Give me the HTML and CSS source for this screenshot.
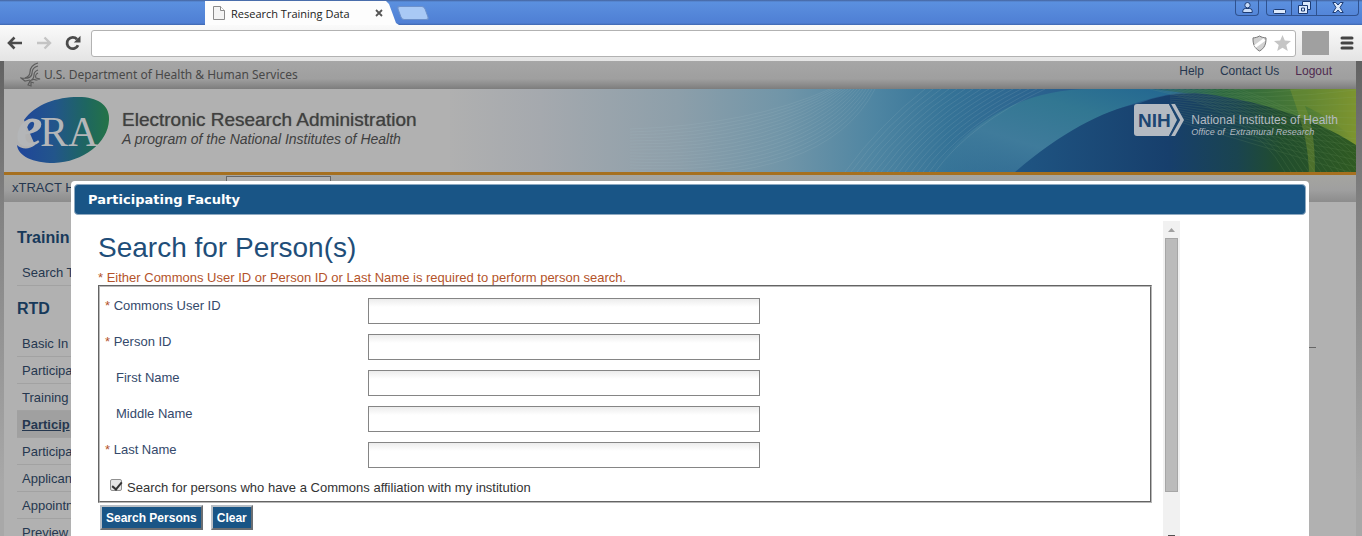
FILE: index.html
```html
<!DOCTYPE html>
<html lang="en">
<head>
    <meta charset="UTF-8">
    <meta name="viewport" content="width=device-width, initial-scale=1.0">
    <title>Research Training Data</title>
    <link rel="stylesheet" href="styles.css">
</head>
<body>
    <!-- Browser frame -->
    <div class="titlebar">
        <div class="tab">
            <svg width="12" height="14" viewBox="0 0 12 14"><path d="M.5.5h7l4 4v9H.5z" fill="#f4f4f4" stroke="#8a8a8a"/><path d="M7.500.5v4h4" fill="#fff" stroke="#8a8a8a"/></svg>
            <span class="tab-title">Research Training Data</span>
            <button class="tab-close" aria-label="Close tab"><svg width="8" height="8" viewBox="0 0 8 8"><path d="M1 1l6 6M7 1L1 7" stroke="#555" stroke-width="1.800"/></svg></button>
        </div>
        <button class="new-tab" aria-label="New tab"></button>
        <div class="window-buttons">
            <button class="user" aria-label="User"><svg width="11" height="11" viewBox="0 0 11 11"><circle cx="5.500" cy="3.200" r="2.700" fill="#c9dcf8" stroke="#1d3c74"/><path d="M.8 10.500V8.800Q1 6.500 3.500 6.500h4q2.500 0 2.700 2.300v1.700z" fill="#c9dcf8" stroke="#1d3c74"/></svg></button>
            <div class="group">
                <button aria-label="Minimize"><svg width="13" height="12" viewBox="0 0 13 12"><rect x=".5" y="7.500" width="12" height="4" rx="1" fill="#dce9fb" stroke="#1d3c74"/></svg></button>
                <button aria-label="Restore"><svg width="13" height="13" viewBox="0 0 13 13"><path d="M4.500.5h8v8h-3v4h-9v-8h4z" fill="#dce9fb" stroke="#1d3c74"/><path d="M4.500 4.500h5v4M3.500 7h3v3h-3z" fill="none" stroke="#1d3c74"/></svg></button>
                <button class="close" aria-label="Close"><svg width="12" height="11" viewBox="0 0 12 11"><path d="M.8.5h3L6 3 8.200.5h3L8 5.500l3.200 5h-3L6 8l-2.200 2.500h-3L4 5.500z" fill="#dce9fb" stroke="#1d3c74"/></svg></button>
            </div>
        </div>
    </div>
    <div class="toolbar">
        <div class="nav-buttons">
            <button aria-label="Back"><svg width="16" height="14" viewBox="0 0 16 14"><path d="M15 7H2M7.500 1.500L2 7l5.500 5.500" fill="none" stroke="#4a4a4a" stroke-width="2.600"/></svg></button>
            <button aria-label="Forward"><svg width="16" height="14" viewBox="0 0 16 14"><path d="M1 7h13M8.500 1.500L14 7l-5.500 5.500" fill="none" stroke="#c4c4c4" stroke-width="2.400"/></svg></button>
            <button aria-label="Reload"><svg width="16" height="16" viewBox="0 0 16 16"><path d="M13 10.200A5.700 5.700 0 1 1 12 4.200" fill="none" stroke="#4a4a4a" stroke-width="2.800"/><path d="M15.500.8v6.700H8.800z" fill="#4a4a4a"/></svg></button>
        </div>
        <div class="omnibox">
            <input type="text" aria-label="Address">
            <svg width="15" height="17" viewBox="0 0 15 17"><path d="M7.500 1c2 1.200 4 1.800 6.500 1.900.2 6-1.500 10.500-6.500 13.100C2.500 13.400.8 8.900 1 2.900 3.500 2.800 5.500 2.200 7.500 1z" fill="#d2d2d2" stroke="#777"/><path d="M3 11.500L12.500 4.500" stroke="#fff" stroke-width="3"/></svg>
            <svg width="17" height="16" viewBox="0 0 17 16"><path d="M8.500 0l2.300 5.600 6.200.4-4.700 3.900 1.500 6.100-5.300-3.300L3.200 16l1.500-6.100L0 6l6.200-.4z" fill="#c5c5c5"/></svg>
        </div>
        <div class="extension"></div>
        <button class="menu" aria-label="Menu"><svg width="14" height="14" viewBox="0 0 14 14"><path d="M2 2h10M2 7h10M2 12h10" stroke="#444" stroke-width="3" stroke-linecap="round"/></svg></button>
    </div>

    <div class="viewport">
        <div class="page">
            <div class="topbar">
                <svg class="hhs" width="21" height="26" viewBox="0 0 21 26"><g fill="none" stroke="#5c5c5c" stroke-width="1.200"><path d="M18 2c-5 1-8 5-8 9 0 3-2 5-5 6"/><path d="M18 5c-4 1-6 4-6 7 0 4-3 6-11 5l4 3 5-1"/><path d="M18 9c-3 1-4 3-4 5 0 3-2 5-4 6l-2 4 3 1v-4l3 1"/><path d="M18 12c-2 1-3 3-2 5l4 1-4 1c-2-1-3-1-4 0"/></g></svg>
                <span class="dept">U.S. Department of Health &amp; Human Services</span>
                <nav class="toplinks">
                    <a href="#">Help</a>
                    <a href="#">Contact Us</a>
                    <a href="#" class="visited">Logout</a>
                </nav>
            </div>
            <header class="banner">
                <svg class="art" viewBox="0 0 906 83" preserveAspectRatio="none">
                    <defs>
                        <linearGradient id="sky"><stop offset="0" stop-color="#b0b0b0"/><stop offset=".1" stop-color="#a5a9ae"/><stop offset=".25" stop-color="#8d9faa"/><stop offset=".37" stop-color="#7095a8"/><stop offset=".47" stop-color="#4e85a2"/><stop offset=".55" stop-color="#357397"/><stop offset=".68" stop-color="#285e8c"/><stop offset="1" stop-color="#205680"/></linearGradient>
                        <linearGradient id="teal" x1="0" y1="1" x2="1" y2="0"><stop offset="0" stop-color="#3f7b9b" stop-opacity="0"/><stop offset=".35" stop-color="#3f7b9b"/><stop offset=".65" stop-color="#327792"/><stop offset="1" stop-color="#206491"/></linearGradient>
                        <linearGradient id="deep" gradientUnits="userSpaceOnUse" x1="565" y1="0" x2="906" y2="0"><stop offset="0" stop-color="#1f5583"/><stop offset=".45" stop-color="#173f6c"/><stop offset=".65" stop-color="#1a4450"/><stop offset=".78" stop-color="#214d2d"/><stop offset="1" stop-color="#2f5a22"/></linearGradient>
                        <linearGradient id="green"><stop offset="0" stop-color="#1f5f7f"/><stop offset=".35" stop-color="#2b663e"/><stop offset=".75" stop-color="#4b7a35"/><stop offset="1" stop-color="#7d9430"/></linearGradient>
                    </defs>
                    <rect width="906" height="83" fill="url(#sky)"/>
                    <path d="M480 83C520 35 570 0 640 0h110C690 8 650 25 618 45L570 83z" fill="url(#teal)"/>
                    <path d="M700 0h206v60C850 25 780 8 700 0z" fill="url(#green)"/>
                    <path d="M565 83C610 45 650 22 690 14Q715 4 745 4C810 10 870 32 906 56v27z" fill="url(#deep)"/>
                    <path d="M840 0c10 28 18 50 19 83h6c0-25-2-48-10-66 18 8 36 20 51 36V0z" fill="#7d9430" opacity=".45"/>
                    <g id="waves" fill="none" stroke="#a9c3cb" stroke-width=".5" opacity=".3"></g>
                    <g id="mesh" fill="none" stroke="#8fb57c" stroke-width=".5" opacity=".25"></g>
                </svg>
                <svg class="era" width="94" height="68" viewBox="0 0 94 68">
                    <defs>
                        <linearGradient id="oval"><stop offset="0" stop-color="#1f459b"/><stop offset=".4" stop-color="#22558b"/><stop offset=".75" stop-color="#1e6660"/><stop offset="1" stop-color="#247346"/></linearGradient>
                    </defs>
                    <path d="M8 24C20 7 44 0 66 1c18 1 28 10 27 23-1 23-26 42-55 43C17 67 2 60 1 49c4 4 12 5 18 0z" fill="url(#oval)"/>
                    <text x="0" y="50" class="era-e">e</text>
                    <text x="24" y="50" class="era-ra">RA</text>
                </svg>
                <div class="brand">
                    <div class="brand-name">Electronic Research Administration</div>
                    <div class="brand-sub">A program of the National Institutes of Health</div>
                </div>
                <div class="nih">
                    <svg width="51" height="32" viewBox="0 0 51 32"><path d="M3 0h32l8 16-8 16H3q-3 0-3-3V3q0-3 3-3z" fill="#b4bac2"/><path d="M36 0l9 16-9 16h5l9-16-9-16z" fill="#b4bac2"/><path d="M36 0l9 16-9 16" fill="none" stroke="#1d4672" stroke-width="2"/><text x="4" y="23" class="nih-mark">NIH</text></svg>
                    <div>
                        <div class="nih-name">National Institutes of Health</div>
                        <div class="nih-sub">Office of &nbsp;Extramural Research</div>
                    </div>
                </div>
            </header>
            <nav class="menubar">
                <a href="#">xTRACT H</a>
                <div class="menu-active"></div>
            </nav>
            <aside class="sidebar">
                <h2>Trainin</h2>
                <ul>
                    <li><a href="#">Search T</a></li>
                </ul>
                <h2>RTD</h2>
                <ul>
                    <li><a href="#">Basic In</a></li>
                    <li><a href="#">Participa</a></li>
                    <li><a href="#">Training</a></li>
                    <li class="current"><a href="#">Particip</a></li>
                    <li><a href="#">Participa</a></li>
                    <li><a href="#">Applican</a></li>
                    <li><a href="#">Appointn</a></li>
                    <li><a href="#">Preview</a></li>
                </ul>
            </aside>
        </div>

        <div class="rule"></div>

        <section class="modal">
            <h3 class="modal-title">Participating Faculty</h3>
            <div class="modal-body">
                <form class="search">
                    <h1>Search for Person(s)</h1>
                    <p class="note">* Either Commons User ID or Person ID or Last Name is required to perform person search.</p>
                    <fieldset>
                        <div class="row"><label for="commonsId"><span class="req">*</span> Commons User ID</label><input type="text" id="commonsId"></div>
                        <div class="row"><label for="personId"><span class="req">*</span> Person ID</label><input type="text" id="personId"></div>
                        <div class="row optional"><label for="firstName">First Name</label><input type="text" id="firstName"></div>
                        <div class="row optional"><label for="middleName">Middle Name</label><input type="text" id="middleName"></div>
                        <div class="row"><label for="lastName"><span class="req">*</span> Last Name</label><input type="text" id="lastName"></div>
                        <div class="check">
                            <input type="checkbox" id="affiliation" checked>
                            <label for="affiliation">Search for persons who have a Commons affiliation with my institution</label>
                        </div>
                    </fieldset>
                    <div class="actions">
                        <button type="button">Search Persons</button>
                        <button type="button">Clear</button>
                    </div>
                </form>
                <div class="scrollbar">
                    <svg width="7" height="4" viewBox="0 0 7 4"><path d="M0 4l3.500-4L7 4z" fill="#a0a0a0"/></svg>
                    <div class="thumb"></div>
                    <div class="arrow-down"></div>
                </div>
            </div>
        </section>
    </div>

    <script>
        // Fine line patterns of the banner artwork
        function addLine(group, d) {
            const path = document.createElementNS('http://www.w3.org/2000/svg', 'path');
            path.setAttribute('d', d);
            group.appendChild(path);
        }

        const waves = document.getElementById('waves');
        for (let i = 0; i < 16; i++) {
            addLine(waves, `M180 ${40 + i * 3} Q${300 + i * 5} ${36 + i * 4} ${380 + i * 3} 0`);
            addLine(waves, `M${395 + i * 6} 83 Q${430 + i * 6} 35 ${475 + i * 8} 0`);
        }

        const mesh = document.getElementById('mesh');
        for (let i = 0; i < 16; i++) {
            addLine(mesh, `M${700 + i * 6} 0 Q${800 + i * 6} ${20 + i} ${835 + i * 6} 83`);
            addLine(mesh, `M720 ${i * 2} Q820 ${i * 4} 906 ${i * 7 - 20}`);
        }
    </script>
</body>
</html>
```
FILE: styles.css
```css
* {
    box-sizing: border-box;
}

body {
    margin: 0;
    height: 100vh;
    display: flex;
    flex-direction: column;
    overflow: hidden;
    font-family: "Liberation Sans", Arial, sans-serif;
    font-size: 13px;
    color: #333;
}

a {
    color: #25374f;
    text-decoration: none;
}

svg {
    display: block;
    flex: none;
}

/* Browser frame */
.titlebar {
    display: flex;
    flex: none;
    height: 25px;
    padding-left: 205px;
    background: linear-gradient(#44629b 0, #5b90df 2px, #4f7fd4 23px, #3e66ae 25px);
}

.titlebar button,
.toolbar button {
    display: flex;
    align-items: center;
    justify-content: center;
    margin: 0;
    padding: 0;
    border: none;
    background: none;
}

.tab {
    display: flex;
    align-items: center;
    width: 194px;
    height: 24px;
    margin-top: 1px;
    padding-left: 8px;
    background: #fdfdfd;
    clip-path: polygon(0 0, 181px 0, 184px 3px, 191px 22px, 194px 24px, 0 24px);
}

.tab-title {
    width: 150px;
    padding-left: 6px;
    font-family: "Open Sans", sans-serif;
    font-size: 11px;
    color: #222;
    white-space: nowrap;
}

.titlebar .new-tab {
    width: 28px;
    height: 14px;
    margin-top: 6px;
    border: 1px solid #6d91cb;
    border-radius: 3px;
    background: #a9c9f5;
    transform: skewX(20deg);
}

.window-buttons {
    display: flex;
    gap: 7px;
    height: 16px;
    margin: 0 3px 0 auto;
}

.titlebar .user,
.group {
    border: 1px solid #2f528f;
    border-top: none;
    border-radius: 0 0 4px 4px;
}

.titlebar .user {
    width: 24px;
}

.group {
    display: flex;
}

.titlebar .group button {
    width: 25px;
    border-right: 1px solid #2f528f;
}

.titlebar .group .close {
    width: 41px;
    border: none;
}

.toolbar {
    display: flex;
    flex: none;
    align-items: center;
    height: 36px;
    padding: 0 8px 0 7px;
    background: linear-gradient(#fafafa, #e4e4e4);
}

.nav-buttons {
    display: flex;
    gap: 13px;
    width: 84px;
}

.omnibox {
    display: flex;
    flex: 1;
    align-items: center;
    gap: 7px;
    height: 27px;
    padding-right: 4px;
    border: 1px solid #b2b2b2;
    border-radius: 3px;
    background: #fff;
}

.omnibox input {
    flex: 1;
    height: 24px;
    border: none;
    background: none;
}

.extension {
    width: 27px;
    height: 24px;
    margin: 0 11px 0 6px;
    background: #a0a0a0;
}

/* Dimmed page */
.viewport {
    position: relative;
    flex: 1;
    min-height: 0;
    padding: 0 6px 0 4px;
    background: linear-gradient(#626262, #828282 150px, #a8a8a8 420px);
}

.page {
    height: 100%;
    overflow: hidden;
    background: #b1b1b1;
}

.topbar {
    display: flex;
    height: 28px;
    padding: 0 24px 0 16px;
    background: linear-gradient(#a6a6a6, #9f9f9f 18px, #7d7d7d);
}

.dept {
    padding-left: 3px;
    font-family: "Noto Sans", sans-serif;
    font-size: 12px;
    line-height: 28px;
    color: #484848;
}

.toplinks {
    display: flex;
    gap: 16px;
    margin-left: auto;
    font-size: 12px;
    line-height: 20px;
}

.toplinks .visited {
    color: #4f2a4f;
}

.banner {
    position: relative;
    display: flex;
    height: 86px;
    padding: 7px 18px 0 12px;
    border-bottom: 3px solid #a6701f;
}

.art {
    position: absolute;
    top: 0;
    right: 0;
    width: 906px;
    height: 83px;
}

.era-e {
    font: italic bold 60px "Liberation Serif", serif;
    fill: #b4b6b8;
}

.era-ra {
    font: 42px "Liberation Serif", serif;
    fill: #b4b6b8;
}

.brand {
    position: relative;
    padding: 12px 0 0 12px;
    color: #404040;
}

.brand-name {
    font-size: 19px;
    line-height: 24px;
    text-shadow: 0 0 1px #606060;
}

.brand-sub {
    font-size: 14px;
    font-style: italic;
    line-height: 14px;
}

.nih {
    position: relative;
    display: flex;
    gap: 6px;
    margin: 8px 0 0 auto;
    color: #b4bac2;
}

.nih-mark {
    font: bold 19px "Liberation Sans", sans-serif;
    fill: #1d4672;
}

.nih-name {
    padding-top: 9px;
    font-size: 12px;
    line-height: 14px;
}

.nih-sub {
    font-size: 9px;
    font-style: italic;
    line-height: 10px;
}

.menubar {
    display: flex;
    height: 27px;
    padding-left: 8px;
    background: linear-gradient(#a5a5a0, #9f9f9f 15px, #8c8c8c);
    line-height: 26px;
}

.menubar a {
    width: 214px;
}

.menu-active {
    width: 105px;
    height: 20px;
    margin-top: 1px;
    border: 1px solid #666;
    background: #b1b1b1;
}

.sidebar {
    width: 200px;
    padding: 26px 0 0 13px;
}

.sidebar h2 {
    margin: 0;
    font-size: 16px;
    line-height: 20px;
    color: #17395a;
}

.sidebar ul {
    margin: 11px 0 13px;
    padding: 0;
    list-style: none;
}

.sidebar li {
    height: 27px;
    padding-left: 5px;
    border-bottom: 1px solid #a2a2a2;
    line-height: 28px;
}

.sidebar .current {
    background: #a0a0a0;
    font-weight: bold;
}

.current a {
    text-decoration: underline;
}

.rule {
    position: absolute;
    top: 286px;
    right: 46px;
    width: 20px;
    border-top: 1px solid #666;
}

/* Dialog */
.modal {
    position: absolute;
    top: 120px;
    right: 53px;
    bottom: 0;
    left: 71px;
    padding: 3px;
    border-radius: 4px 4px 0 0;
    background: #fff;
    overflow: hidden;
}

.modal-title {
    height: 31px;
    margin: 0;
    padding-left: 13px;
    border: 1px solid #8fa9c0;
    border-radius: 4px;
    background: #195586;
    font-family: "DejaVu Sans", Verdana, sans-serif;
    font-size: 13px;
    line-height: 29px;
    color: #fff;
}

.modal-body {
    display: flex;
    gap: 11px;
    height: 360px;
    padding: 6px 126px 0 24px;
}

.search {
    flex: 1;
}

.search h1 {
    margin: 0;
    padding-top: 11px;
    font-size: 28px;
    font-weight: normal;
    line-height: 32px;
    color: #1f4e79;
}

.note {
    margin: 6px 0 0;
    line-height: 15px;
    color: #b4532a;
}

fieldset {
    display: flex;
    flex-direction: column;
    gap: 10px;
    margin: 0;
    padding: 11px 5px 4px;
    border: 2px groove #b8b8b8;
}

.row {
    display: flex;
}

.row label {
    width: 263px;
    line-height: 15px;
    color: #34496b;
}

.row.optional label {
    padding-left: 11px;
}

.req {
    color: #b4532a;
}

.row input {
    width: 392px;
    height: 26px;
    border: 1px solid #858585;
    background: linear-gradient(#ececec, #fff 8px);
}

.check {
    display: flex;
    gap: 5px;
    padding-left: 5px;
    line-height: 19px;
}

.check input {
    appearance: none;
    width: 12px;
    height: 12px;
    margin: 1px 0 0;
    border: 1px solid #909090;
    border-radius: 2px;
    background: #e6e6e6;
}

.check input:checked::before {
    content: "";
    display: block;
    width: 4px;
    height: 8px;
    margin-left: 3px;
    border: solid #333;
    border-width: 0 2px 2px 0;
    transform: rotate(40deg);
}

.actions {
    display: flex;
    gap: 8px;
    padding: 2px;
}

.actions button {
    height: 25px;
    padding: 0 4px;
    border: 2px outset #b8bfc6;
    background: #195586;
    font: bold 12px "Liberation Sans", Arial, sans-serif;
    color: #fff;
}

.scrollbar {
    display: flex;
    flex-direction: column;
    align-items: center;
    width: 17px;
    padding-top: 7px;
    background: #f1f1f1;
}

.thumb {
    width: 13px;
    height: 254px;
    margin: 6px 0 43px;
    border: 1px solid #a6a6a6;
    background: #bbb;
}

.arrow-down {
    width: 7px;
    height: 5px;
    background: #505050;
}
```
